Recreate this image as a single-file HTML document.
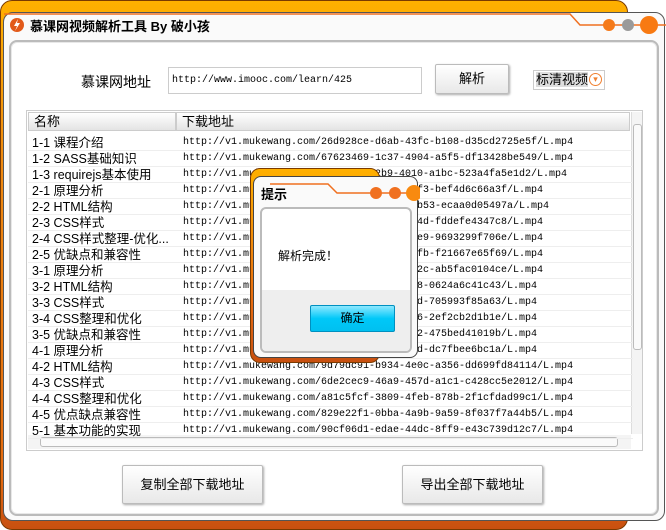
<!DOCTYPE html>
<html><head><meta charset="utf-8"><style>
*{margin:0;padding:0;box-sizing:border-box}
body{width:666px;height:530px;position:relative;overflow:hidden;background:#fff;font-family:"Liberation Sans","Noto Sans CJK SC","WenQuanYi Zen Hei",sans-serif;font-size:12px;color:#000}
.abs{position:absolute}
.orange{left:0;top:0;width:628px;height:530px;border-radius:12px;background:linear-gradient(#ffb000,#f08a10 30%,#e46a10 90%,#c85010);border:1px solid #7a3a00}
.frame{left:3px;top:12px;width:662px;height:509px;background:#fafafa;border:1px solid #555;border-radius:10px}
.inner{left:9px;top:40px;width:650px;height:476px;background:#fff;border:2px solid #bbb;border-radius:8px;box-shadow:inset 0 0 0 1px #e8e8e8}
.mono{font-family:"Liberation Mono","Courier New",monospace;font-size:10px}
.btn{background:linear-gradient(#fff,#e8e8e8);border:1px solid #bbb;border-radius:2px;box-shadow:1px 1px 2px #aaa;text-align:center;font-size:13px}
.row{position:absolute;left:0;height:16px;width:605px;border-bottom:1px solid #eee;line-height:16px}
.row span{position:absolute}
.row span:first-child{font-size:12.5px}
</style></head><body>
<div class="abs orange"></div>
<div class="abs frame"></div>
<svg class="abs" style="left:0;top:0" width="666" height="45">
<polyline points="4,14 570,14 580,25 666,25" fill="none" stroke="#f07020" stroke-width="1.5"/>
<circle cx="609" cy="25" r="6" fill="#f57a1a"/><circle cx="628" cy="25" r="6" fill="#9a9a9a"/><circle cx="649" cy="25" r="9" fill="#f87a12"/>
<circle cx="17" cy="25" r="7" fill="#e25a1a"/><path d="M18 19 L14 26 L17 26 L15 31 L20 23 L17 23 Z" fill="#fff"/>
</svg>
<div class="abs" style="left:30px;top:16px;font-size:13px;font-weight:bold">慕课网视频解析工具 By 破小孩</div>
<div class="abs inner"></div>
<div class="abs" style="left:81px;top:72px;font-size:14px">慕课网地址</div>
<div class="abs mono" style="left:168px;top:67px;width:254px;height:27px;border:1px solid #ccc;line-height:26px;padding-left:3px">http://www.imooc.com/learn/425</div>
<div class="abs btn" style="left:435px;top:64px;width:74px;height:30px;line-height:28px">解析</div>
<div class="abs" style="left:533px;top:70px;width:72px;height:20px;border:1px solid #ccc;font-size:13px;line-height:18px;padding-left:2px"><span style="background:#ddd">标清视频</span><span class="abs" style="right:2px;top:2px;width:13px;height:13px;border:1px solid #f08030;border-radius:50%;color:#f08030;font-size:9px;line-height:11px;text-align:center">▾</span></div>
<div class="abs" style="left:26px;top:110px;width:617px;height:341px;border:1px solid #ccc;overflow:hidden">
 <div class="abs" style="left:1px;top:1px;width:148px;height:19px;background:linear-gradient(#fff,#e4e4e4);border:1px solid #ccc;padding-left:5px;line-height:18px;font-size:13px">名称</div>
 <div class="abs" style="left:149px;top:1px;width:454px;height:19px;background:linear-gradient(#fff,#e4e4e4);border:1px solid #ccc;padding-left:5px;line-height:18px;font-size:13px">下载地址</div>
 <div class="abs" style="left:604px;top:1px;width:11px;height:322px;background:#f4f4f4;border-left:1px solid #ddd"><div style="position:absolute;top:12px;left:1px;width:9px;height:226px;border:1px solid #bbb;border-radius:3px;background:#fafafa"></div></div>
 <div class="abs" style="left:1px;top:324px;width:603px;height:14px;background:#f4f4f4"><div style="position:absolute;left:12px;top:2px;width:578px;height:10px;border:1px solid #bbb;border-radius:3px;background:#fafafa"></div></div>
 <div class="abs" style="left:1px;top:24px">
 <div class="row" style="top:0"><span style="left:4px">1-1 课程介绍</span><span class="mono" style="left:155px">http://v1.mukewang.com/26d928ce-d6ab-43fc-b108-d35cd2725e5f/L.mp4</span></div>
 <div class="row" style="top:16px"><span style="left:4px">1-2 SASS基础知识</span><span class="mono" style="left:155px">http://v1.mukewang.com/67623469-1c37-4904-a5f5-df13428be549/L.mp4</span></div>
 <div class="row" style="top:32px"><span style="left:4px">1-3 requirejs基本使用</span><span class="mono" style="left:155px">http://v1.mukewang.com/3b1c1e12-2b9-4010-a1bc-523a4fa5e1d2/L.mp4</span></div>
 <div class="row" style="top:48px"><span style="left:4px">2-1 原理分析</span><span class="mono" style="left:155px">http://v1.mukewang.com/8d8a0c1a-b2ae-a4f3-bef4d6c66a3f/L.mp4</span></div>
 <div class="row" style="top:64px"><span style="left:4px">2-2 HTML结构</span><span class="mono" style="left:155px">http://v1.mukewang.com/1f0a8c3e-e1d79-ab53-ecaa0d05497a/L.mp4</span></div>
 <div class="row" style="top:80px"><span style="left:4px">2-3 CSS样式</span><span class="mono" style="left:155px">http://v1.mukewang.com/5e6f1a2b-c043-874d-fddefe4347c8/L.mp4</span></div>
 <div class="row" style="top:96px"><span style="left:4px">2-4 CSS样式整理-优化...</span><span class="mono" style="left:155px">http://v1.mukewang.com/a1b2c3d4-e543-96e9-9693299f706e/L.mp4</span></div>
 <div class="row" style="top:112px"><span style="left:4px">2-5 优缺点和兼容性</span><span class="mono" style="left:155px">http://v1.mukewang.com/0a1b2c3d-e4fd-98fb-f21667e65f69/L.mp4</span></div>
 <div class="row" style="top:128px"><span style="left:4px">3-1 原理分析</span><span class="mono" style="left:155px">http://v1.mukewang.com/1b2c3d4e-f5ee-ac2c-ab5fac0104ce/L.mp4</span></div>
 <div class="row" style="top:144px"><span style="left:4px">3-2 HTML结构</span><span class="mono" style="left:155px">http://v1.mukewang.com/2c3d4e5f-6b0-8908-0624a6c41c43/L.mp4</span></div>
 <div class="row" style="top:160px"><span style="left:4px">3-3 CSS样式</span><span class="mono" style="left:155px">http://v1.mukewang.com/3d4e5f6a-7b1-888d-705993f85a63/L.mp4</span></div>
 <div class="row" style="top:176px"><span style="left:4px">3-4 CSS整理和优化</span><span class="mono" style="left:155px">http://v1.mukewang.com/4e5f6a7b-898-9186-2ef2cb2d1b1e/L.mp4</span></div>
 <div class="row" style="top:192px"><span style="left:4px">3-5 优缺点和兼容性</span><span class="mono" style="left:155px">http://v1.mukewang.com/5f6a7b8c-91a-9a92-475bed41019b/L.mp4</span></div>
 <div class="row" style="top:208px"><span style="left:4px">4-1 原理分析</span><span class="mono" style="left:155px">http://v1.mukewang.com/6a7b8c9d-a1f-a65d-dc7fbee6bc1a/L.mp4</span></div>
 <div class="row" style="top:224px"><span style="left:4px">4-2 HTML结构</span><span class="mono" style="left:155px">http://v1.mukewang.com/9d79dc91-b934-4e0c-a356-dd699fd84114/L.mp4</span></div>
 <div class="row" style="top:240px"><span style="left:4px">4-3 CSS样式</span><span class="mono" style="left:155px">http://v1.mukewang.com/6de2cec9-46a9-457d-a1c1-c428cc5e2012/L.mp4</span></div>
 <div class="row" style="top:256px"><span style="left:4px">4-4 CSS整理和优化</span><span class="mono" style="left:155px">http://v1.mukewang.com/a81c5fcf-3809-4feb-878b-2f1cfdad99c1/L.mp4</span></div>
 <div class="row" style="top:272px"><span style="left:4px">4-5 优点缺点兼容性</span><span class="mono" style="left:155px">http://v1.mukewang.com/829e22f1-0bba-4a9b-9a59-8f037f7a44b5/L.mp4</span></div>
 <div class="row" style="top:288px"><span style="left:4px">5-1 基本功能的实现</span><span class="mono" style="left:155px">http://v1.mukewang.com/90cf06d1-edae-44dc-8ff9-e43c739d12c7/L.mp4</span></div>
 </div>
</div>
<div class="abs btn" style="left:122px;top:465px;width:141px;height:39px;line-height:38px">复制全部下载地址</div>
<div class="abs btn" style="left:402px;top:465px;width:141px;height:39px;line-height:38px">导出全部下载地址</div>
<!-- dialog -->
<div class="abs" style="left:250px;top:168px;width:130px;height:195px;border-radius:10px;background:linear-gradient(#ffb000,#e86a10 70%,#c85010);border:1px solid #7a3a00"></div>
<div class="abs" style="left:253px;top:176px;width:165px;height:182px;background:#fafafa;border:1px solid #444;border-radius:8px"></div>
<svg class="abs" style="left:250px;top:168px" width="170" height="40">
<polyline points="20,16 78,16 87,25 170,25" fill="none" stroke="#f07020" stroke-width="1.5"/>
<circle cx="126" cy="25" r="6" fill="#f07020"/><circle cx="145" cy="25" r="6" fill="#f07020"/><circle cx="164" cy="25" r="8" fill="#f88a10"/>
</svg>
<div class="abs" style="left:261px;top:184px;font-size:13px;font-weight:bold">提示</div>
<div class="abs" style="left:260px;top:207px;width:152px;height:146px;background:#fff;border:2px solid #bbb;border-radius:6px;overflow:hidden">
 <div class="abs" style="left:0;top:81px;width:150px;height:63px;background:#eee"></div>
 <div class="abs" style="left:16px;top:38px;font-size:12px">解析完成！</div>
 <div class="abs" style="left:48px;top:96px;width:85px;height:27px;background:linear-gradient(#8ee8ff,#00c8f8 50%,#00c0f0);border:1px solid #0090c0;border-radius:2px;text-align:center;line-height:25px;font-size:12px">确定</div>
</div>
</body></html>
